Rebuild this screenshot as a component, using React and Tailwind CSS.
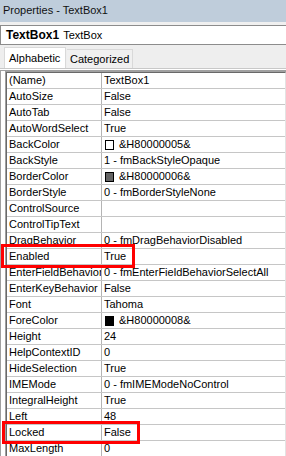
import React from "react";

const rows = [
  ["(Name)", "TextBox1"],
  ["AutoSize", "False"],
  ["AutoTab", "False"],
  ["AutoWordSelect", "True"],
  ["BackColor", "&H80000005&", "bg-white"],
  ["BackStyle", "1 - fmBackStyleOpaque"],
  ["BorderColor", "&H80000006&", "bg-[#646464]"],
  ["BorderStyle", "0 - fmBorderStyleNone"],
  ["ControlSource", ""],
  ["ControlTipText", ""],
  ["DragBehavior", "0 - fmDragBehaviorDisabled"],
  ["Enabled", "True"],
  ["EnterFieldBehavior", "0 - fmEnterFieldBehaviorSelectAll"],
  ["EnterKeyBehavior", "False"],
  ["Font", "Tahoma"],
  ["ForeColor", "&H80000008&", "bg-black"],
  ["Height", "24"],
  ["HelpContextID", "0"],
  ["HideSelection", "True"],
  ["IMEMode", "0 - fmIMEModeNoControl"],
  ["IntegralHeight", "True"],
  ["Left", "48"],
  ["Locked", "False"],
  ["MaxLength", "0"],
];

export default function App() {
  return (
    <div
      className="relative w-[286px] h-[456px] overflow-hidden bg-[#f0f0f0] text-black text-[11px]"
      style={{ fontFamily: '"Liberation Sans", Arial, sans-serif' }}
    >
      {/* title bar */}
      <div className="h-[22px] bg-[#bfcddb] flex items-center pl-[3px] pb-[2px]">
        <span className="text-[11px] text-[#111111]">Properties - TextBox1</span>
      </div>
      <div className="h-[3px] bg-[#f0f0f0]" />
      {/* object box */}
      <div className="h-[20px] bg-white border-y border-l border-[#8c8c8c] flex items-center pl-[5px] gap-[4px]">
        <span className="font-bold text-[12px]">TextBox1</span>
        <span>TextBox</span>
      </div>
      {/* tab strip */}
      <div className="h-[23px] bg-[#eeeeee] flex items-end pl-[4px]">
        <div className="h-[21px] w-[62px] bg-white border-t border-l border-r border-[#d9d9d9] flex items-center pl-[4px]">
          Alphabetic
        </div>
        <div className="h-[19px] w-[66px] ml-[1px] bg-[#f0f0f0] border-t border-r border-[#d9d9d9] flex items-center pl-[3px] pt-[1px]">
          Categorized
        </div>
      </div>
      {/* tab page */}
      <div className="border-t border-[#c8c8c8] bg-white pt-[1px]">
        <div className="border-t border-[#a0a0a0]">
          <div className="flex">
            <div className="w-[1px] bg-[#a0a0a0]" />
            <div className="w-[4px] bg-white" />
            <div className="flex-1 border-l border-t border-[#a0a0a0]">
              <div className="border-l border-t border-[#696969] border-r border-r-[#e3e3e3] bg-white">
                {rows.map(([label, value, swatch]) => (
                  <div key={label} className="flex h-[16px] border-b border-[#c6c6c6] leading-[15px]">
                    <div className="w-[94px] pl-[2px] overflow-hidden whitespace-nowrap">{label}</div>
                    <div className="w-[1px] bg-[#b4b4b4]" />
                    <div className="flex-1 pl-[2px] whitespace-nowrap overflow-hidden flex items-center">
                      {swatch && (
                        <span className={`inline-block w-[9px] h-[10px] border border-black ${swatch} mr-[5px] ml-[1px]`} />
                      )}
                      <span>{value}</span>
                    </div>
                  </div>
                ))}
              </div>
            </div>
          </div>
        </div>
      </div>

      {/* red highlight boxes */}
      <div className="absolute left-[1px] top-[244px] w-[134px] h-[24px] border-[3px] border-[#ff0000]" />
      <div className="absolute left-[2px] top-[421px] w-[138px] h-[23px] border-[3px] border-[#ff0000]" />
    </div>
  );
}
